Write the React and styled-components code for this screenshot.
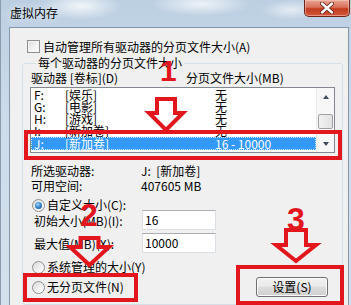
import styled, { createGlobalStyle } from "styled-components";

const GlobalStyle = createGlobalStyle`
  html, body {
    margin: 0;
    padding: 0;
  }
  body {
    width: 351px;
    height: 305px;
    overflow: hidden;
    font-family: "Noto Sans CJK SC", "Liberation Sans", sans-serif;
    font-size: 12px;
    color: #000;
  }
`;

const RED = "#e3151d";

const drives = [
  { letter: "F:", label: "[娱乐]", size: "无" },
  { letter: "G:", label: "[电影]", size: "无" },
  { letter: "H:", label: "[游戏]", size: "无" },
  { letter: "I:", label: "[新加卷]", size: "无" },
  { letter: "J:", label: "[新加卷]", size: "16 - 10000", selected: true },
];

function Arrow({ x, y, w, h, stem, head }) {
  const cx = w / 2;
  const s = stem / 2;
  const hy = h - head;
  const pts = [
    [cx - s, 2],
    [cx + s, 2],
    [cx + s, hy],
    [w - 2, hy],
    [cx, h - 3],
    [2, hy],
    [cx - s, hy],
  ]
    .map((p) => p.join(","))
    .join(" ");
  return (
    <ArrowSvg $x={x} $y={y} width={w} height={h} viewBox={`0 0 ${w} ${h}`}>
      <polygon points={pts} fill="none" stroke={RED} strokeWidth="4" strokeLinejoin="miter" />
    </ArrowSvg>
  );
}

export default function App() {
  return (
    <Window>
      <GlobalStyle />
      <TitleBar>
        <Title>虚拟内存</Title>
        <CloseButton>
          <svg width="16" height="12" viewBox="0 0 16 12">
            <path d="M3 1.5 L13 10.5 M13 1.5 L3 10.5" stroke="#5a1a10" strokeWidth="4" strokeLinecap="round" />
            <path d="M3 1.5 L13 10.5 M13 1.5 L3 10.5" stroke="#fff" strokeWidth="2.4" strokeLinecap="round" />
          </svg>
        </CloseButton>
      </TitleBar>

      <Panel>
        <CheckRow>
          <CheckBox />
          <span>自动管理所有驱动器的分页文件大小(A)</span>
        </CheckRow>

        <GroupBox>
          <Legend>每个驱动器的分页文件大小</Legend>
          <ListHeader>
            <HeaderCell $w={155}>驱动器 [卷标](D)</HeaderCell>
            <HeaderCell>分页文件大小(MB)</HeaderCell>
          </ListHeader>

          <ListBox>
            <Rows>
              {drives.map((d) => (
                <DriveRow key={d.letter} $selected={d.selected}>
                  <span>{d.letter}</span>
                  <span>{d.label}</span>
                  <span>{d.size}</span>
                </DriveRow>
              ))}
            </Rows>
            <ScrollBar>
              <ScrollButton>
                <Triangle $up />
              </ScrollButton>
              <Thumb />
              <ScrollButton>
                <Triangle />
              </ScrollButton>
            </ScrollBar>
          </ListBox>

          <InfoGrid>
            <span>所选驱动器:</span>
            <span>J:&nbsp;&nbsp;[新加卷]</span>
            <span>可用空间:</span>
            <span>407605 MB</span>
          </InfoGrid>

          <RadioRow $top={6}>
            <Radio $checked />
            <span>自定义大小(C):</span>
          </RadioRow>
          <SizeRow $top={-1}>
            <span>初始大小(MB)(I):</span>
            <TextBox>16</TextBox>
          </SizeRow>
          <SizeRow $top={3}>
            <span>最大值(MB)(X):</span>
            <TextBox>10000</TextBox>
          </SizeRow>
          <RadioRow $top={8}>
            <Radio />
            <span>系统管理的大小(Y)</span>
          </RadioRow>
          <BottomRow>
            <RadioRow $top={0}>
              <Radio />
              <span>无分页文件(N)</span>
            </RadioRow>
            <PushButton>设置(S)</PushButton>
          </BottomRow>
        </GroupBox>
      </Panel>

      <Mark $x={23} $y={130} $w={318} $h={30} />
      <Mark $x={22} $y={273} $w={115} $h={29} />
      <Mark $x={235} $y={265} $w={108} $h={40} />

      <Digit $x={159} $y={56} $size={30}>1</Digit>
      <Digit $x={79} $y={199} $size={32}>2</Digit>
      <Digit $x={286} $y={203} $size={32}>3</Digit>

      <Arrow x={146} y={97} w={38} h={36} stem={18} head={20} />
      <Arrow x={67} y={236} w={43} h={32} stem={18} head={21} />
      <Arrow x={273} y={228} w={44} h={36} stem={20} head={19} />
    </Window>
  );
}

const Window = styled.div`
  position: relative;
  width: 351px;
  height: 305px;
  display: flex;
  flex-direction: column;
  box-sizing: border-box;
  border-left: 1px solid #8a9cb0;
  background:
    radial-gradient(ellipse 40px 14px at 80px 6px, rgba(255, 255, 255, 0.8), transparent),
    radial-gradient(ellipse 50px 12px at 200px 4px, rgba(255, 255, 255, 0.75), transparent),
    radial-gradient(ellipse 30px 10px at 290px 10px, rgba(255, 255, 255, 0.6), transparent),
    linear-gradient(180deg, #bccfe2 0%, #cddceb 40%, #d3e0ed 100%);
`;

const TitleBar = styled.div`
  height: 27px;
  display: flex;
  justify-content: space-between;
  align-items: flex-start;
`;

const Title = styled.div`
  padding: 5px 0 0 9px;
  font-size: 12px;
  line-height: 16px;
  text-shadow: 0 0 6px rgba(255, 255, 255, 0.9);
`;

const CloseButton = styled.div`
  width: 46px;
  height: 17px;
  margin-right: 1px;
  box-sizing: border-box;
  border: 1px solid #6e2418;
  border-top: none;
  border-radius: 0 0 5px 5px;
  background: linear-gradient(180deg, #e9a595 0%, #d9705a 45%, #c23b1f 55%, #d2583a 100%);
  box-shadow: inset 0 0 0 1px rgba(255, 210, 200, 0.5);
  display: flex;
  align-items: center;
  justify-content: center;
`;

const Panel = styled.div`
  flex: 1;
  margin: 0 2px 0 8px;
  border: 1px solid #8497ab;
  border-bottom: none;
  background: #f0f0f0;
  display: flex;
  flex-direction: column;
  min-height: 0;
`;

const CheckRow = styled.div`
  margin: 12px 0 0 17px;
  height: 13px;
  line-height: 13px;
  display: flex;
  align-items: center;
  gap: 3px;
`;

const CheckBox = styled.span`
  width: 13px;
  height: 13px;
  box-sizing: border-box;
  border: 1px solid #8e8f8f;
  background: linear-gradient(135deg, #dcdcdc 0%, #f4f4f4 60%, #ffffff 100%);
  box-shadow: inset 0 0 0 1px #f4f4f4;
`;

const GroupBox = styled.fieldset`
  margin: 3px 5px 0 12px;
  padding: 0 7px;
  border: 1px solid #d5dfe5;
  border-radius: 3px;
  min-width: 0;
  flex: 1;
`;

const Legend = styled.legend`
  margin-left: 6px;
  padding: 0 2px;
  line-height: 14px;
`;

const ListHeader = styled.div`
  display: flex;
  margin-top: 1px;
  padding-left: 1px;
  line-height: 14px;
`;

const HeaderCell = styled.span`
  width: ${(p) => (p.$w ? `${p.$w}px` : "auto")};
`;

const ListBox = styled.div`
  margin-top: 2px;
  height: 66px;
  box-sizing: border-box;
  border: 1px solid #828790;
  background: #fff;
  display: flex;
  overflow: hidden;
`;

const Rows = styled.div`
  flex: 1;
  padding-top: 1px;
`;

const DriveRow = styled.div`
  display: grid;
  grid-template-columns: 31px 150px 1fr;
  padding-left: 3px;
  height: ${(p) => (p.$selected ? "13px" : "12px")};
  line-height: ${(p) => (p.$selected ? "13px" : "12px")};
  box-sizing: border-box;
  white-space: nowrap;
  background: ${(p) => (p.$selected ? "#3399ff" : "transparent")};
  color: ${(p) => (p.$selected ? "#fff" : "#000")};
  outline: ${(p) => (p.$selected ? "1px dotted #cfe6ff" : "none")};
  outline-offset: -1px;
`;

const ScrollBar = styled.div`
  width: 17px;
  display: flex;
  flex-direction: column;
  background: #f7f7f7;
  border-left: 1px solid #ececec;
`;

const ScrollButton = styled.div`
  height: 17px;
  display: flex;
  align-items: center;
  justify-content: center;
`;

const Triangle = styled.span`
  width: 0;
  height: 0;
  border-left: 3.5px solid transparent;
  border-right: 3.5px solid transparent;
  ${(p) =>
    p.$up ? "border-bottom: 4px solid #404a5a;" : "border-top: 4px solid #404a5a;"}
`;

const Thumb = styled.div`
  margin: 9px 1px 0 1px;
  height: 15px;
  flex: none;
  box-sizing: border-box;
  border: 1px solid #a0a0a0;
  border-radius: 2px;
  background: linear-gradient(90deg, #f2f2f2, #e2e2e2);
  margin-bottom: auto;
`;

const InfoGrid = styled.div`
  margin-top: 10px;
  padding-left: 1px;
  display: grid;
  grid-template-columns: 110px 1fr;
  line-height: 15px;
  white-space: pre;
`;

const RadioRow = styled.div`
  margin-top: ${(p) => p.$top}px;
  margin-left: 2px;
  height: 12px;
  line-height: 12px;
  display: flex;
  align-items: center;
  gap: 2px;
  white-space: nowrap;
`;

const Radio = styled.span`
  position: relative;
  width: 13px;
  height: 13px;
  box-sizing: border-box;
  border: 1px solid #8e8f8f;
  border-radius: 50%;
  background: linear-gradient(135deg, #d8d8d8 0%, #f3f3f3 60%, #ffffff 100%);
  flex: none;

  &::after {
    content: "";
    display: ${(p) => (p.$checked ? "block" : "none")};
    position: absolute;
    left: 2px;
    top: 2px;
    width: 7px;
    height: 7px;
    border-radius: 50%;
    background: radial-gradient(circle at 40% 35%, #9fd4ff 0%, #2c7cc4 55%, #134a7c 100%);
  }
`;

const SizeRow = styled.div`
  margin-top: ${(p) => p.$top}px;
  padding-left: 4px;
  display: grid;
  grid-template-columns: 108px 74px;
  align-items: center;
  white-space: nowrap;
`;

const TextBox = styled.div`
  height: 20px;
  box-sizing: border-box;
  border: 1px solid #dbdfe6;
  border-top-color: #abadb3;
  background: #fff;
  padding-left: 2px;
  line-height: 18px;
`;

const BottomRow = styled.div`
  margin-top: 4px;
  display: flex;
  align-items: center;
  justify-content: space-between;
  padding-right: 7px;
`;

const PushButton = styled.div`
  width: 72px;
  height: 20px;
  box-sizing: border-box;
  border: 1px solid #707070;
  border-radius: 3px;
  background: linear-gradient(180deg, #f2f2f2 0%, #ebebeb 45%, #dddddd 50%, #cfcfcf 100%);
  box-shadow: inset 0 0 0 1px #fcfcfc;
  text-align: center;
  line-height: 18px;
`;

const Mark = styled.div`
  position: absolute;
  left: ${(p) => p.$x}px;
  top: ${(p) => p.$y}px;
  width: ${(p) => p.$w}px;
  height: ${(p) => p.$h}px;
  box-sizing: border-box;
  border: 4px solid ${RED};
`;

const Digit = styled.div`
  position: absolute;
  left: ${(p) => p.$x}px;
  top: ${(p) => p.$y}px;
  font-family: "Liberation Sans", Arial, sans-serif;
  font-weight: bold;
  font-size: ${(p) => p.$size}px;
  line-height: ${(p) => p.$size}px;
  color: ${RED};
`;

const ArrowSvg = styled.svg`
  position: absolute;
  left: ${(p) => p.$x}px;
  top: ${(p) => p.$y}px;
  overflow: visible;
`;
